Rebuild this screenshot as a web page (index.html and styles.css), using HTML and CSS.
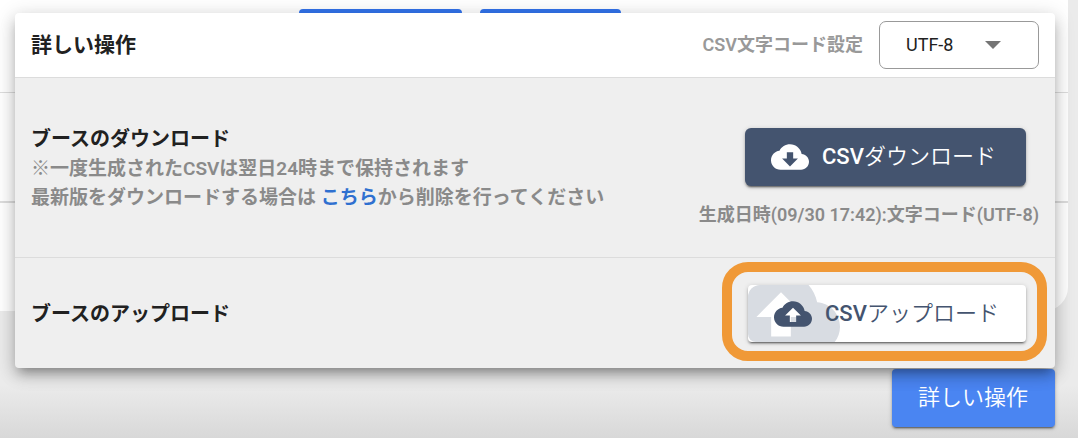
FILE: index.html
```html
<!DOCTYPE html>
<html lang="ja">
<head>
    <meta charset="UTF-8">
    <meta name="viewport" content="width=device-width, initial-scale=1.0">
    <title>詳しい操作</title>
    <link rel="stylesheet" href="styles.css">
</head>
<body>
    <!-- page sheet behind the panel -->
    <div class="sheet" aria-hidden="true">
        <div class="sheet-actions">
            <span class="sheet-tab"></span>
            <span class="sheet-tab short"></span>
        </div>
        <div class="sheet-line"></div>
        <div class="sheet-line thick"></div>
    </div>

    <main class="page">
        <section class="panel">
            <header class="panel-header">
                <h2>詳しい操作</h2>
                <div class="charset">
                    <label for="charset">CSV文字コード設定</label>
                    <div class="select-box">
                        <select id="charset">
                            <option>UTF-8</option>
                        </select>
                        <svg class="caret" viewBox="0 0 16 8"><path d="M0 0h16L8 8z"/></svg>
                    </div>
                </div>
            </header>

            <div class="row download-row">
                <div class="description">
                    <h3>ブースのダウンロード</h3>
                    <p>※一度生成されたCSVは翌日24時まで保持されます</p>
                    <p>最新版をダウンロードする場合は <a href="#">こちら</a>から削除を行ってください</p>
                </div>
                <div class="download">
                    <button type="button" class="btn btn-navy">
                        <svg class="icon" viewBox="0 4 24 16"><path d="M19.35 10.04C18.67 6.59 15.64 4 12 4 9.11 4 6.6 5.64 5.35 8.04 2.34 8.36 0 10.91 0 14c0 3.31 2.69 6 6 6h13c2.76 0 5-2.24 5-5 0-2.64-2.05-4.78-4.65-4.96zM17 13l-5 5-5-5h3V9h4v4h3z"/></svg>
                        <span class="btn-text"><b>CSV</b>ダウンロード</span>
                    </button>
                    <p class="generated">生成日時(09/30 17:42):文字コード(UTF-8)</p>
                </div>
            </div>

            <div class="row upload-row">
                <h3>ブースのアップロード</h3>
                <div class="upload">
                    <button type="button" class="btn btn-white">
                        <span class="watermark">
                            <svg viewBox="0 0 24 24"><path d="M19.35 10.04C18.67 6.59 15.64 4 12 4 9.11 4 6.6 5.64 5.35 8.04 2.34 8.36 0 10.91 0 14c0 3.31 2.69 6 6 6h13c2.76 0 5-2.24 5-5 0-2.64-2.05-4.78-4.65-4.96zM14 13v4h-4v-4H7l5-5 5 5h-3z"/></svg>
                        </span>
                        <svg class="icon" viewBox="0 4 24 16"><path d="M19.35 10.04C18.67 6.59 15.64 4 12 4 9.11 4 6.6 5.64 5.35 8.04 2.34 8.36 0 10.91 0 14c0 3.31 2.69 6 6 6h13c2.76 0 5-2.24 5-5 0-2.64-2.05-4.78-4.65-4.96zM14 13v4h-4v-4H7l5-5 5 5h-3z"/></svg>
                        <span class="btn-text"><b>CSV</b>アップロード</span>
                    </button>
                    <span class="highlight"></span>
                </div>
            </div>
        </section>

        <button type="button" class="btn btn-blue"><span class="btn-text">詳しい操作</span></button>
    </main>
</body>
</html>
```

FILE: styles.css
```css
* {
    margin: 0;
    padding: 0;
    box-sizing: border-box;
}

body {
    position: relative;
    min-height: 100vh;
    background: linear-gradient(#ebebeb 88%, #d8d8d8);
    font-family: Roboto, "Noto Sans CJK JP", sans-serif;
    color: #212121;
}

/* background sheet */
.sheet {
    position: absolute;
    top: 0;
    left: 0;
    right: 10px;
    height: 311px;
    padding-top: 9px;
    background: #fff;
    border-bottom-right-radius: 24px;
}

.sheet-actions {
    display: flex;
    gap: 18px;
    height: 83px;
    padding-left: 299px;
}

.sheet-tab {
    width: 163px;
    height: 58px;
    border-radius: 4px;
    background: #3273ec;
}

.sheet-tab.short {
    width: 141px;
}

.sheet-line {
    height: 109px;
    border-top: 1px solid #ddd;
}

.sheet-line.thick {
    border-top-width: 2px;
}

.page {
    position: relative;
    display: flex;
    flex-direction: column;
    padding: 13px 23px 0 15px;
}

/* panel */
.panel {
    position: relative;
    z-index: 1;
    border-radius: 4px;
    background: #efefef;
    box-shadow: 0 8px 10px -5px rgba(0, 0, 0, 0.3),
                0 8px 16px 1px rgba(0, 0, 0, 0.14),
                0 3px 20px 2px rgba(0, 0, 0, 0.12);
}

.panel-header {
    display: flex;
    justify-content: space-between;
    align-items: center;
    padding: 8px 16px;
    border-bottom: 1px solid #dcdcdc;
    border-radius: 4px 4px 0 0;
    background: #fff;
}

h2, h3 {
    font-size: 20px;
    font-weight: 600;
    line-height: 30px;
}

h2 {
    font-size: 21px;
}

.charset {
    display: flex;
    align-items: center;
    gap: 16px;
}

.charset label {
    color: #999;
    font-size: 18px;
    font-weight: 600;
    line-height: 26px;
}

.select-box {
    position: relative;
}

.select-box select {
    display: block;
    width: 160px;
    height: 48px;
    padding: 0 26px 2px;
    border: 1px solid #999;
    border-radius: 7px;
    background: #fff;
    color: #212121;
    font-family: inherit;
    font-size: 18px;
    appearance: none;
}

.caret {
    position: absolute;
    top: 20px;
    right: 38px;
    width: 16px;
    height: 8px;
    fill: #757575;
    pointer-events: none;
}

.row {
    display: flex;
    justify-content: space-between;
    padding: 0 16px;
}

.download-row {
    padding-top: 45px;
    padding-bottom: 29px;
    border-bottom: 1px solid #dcdcdc;
}

.description p {
    color: #8a8a8a;
    font-size: 19px;
    font-weight: 600;
    line-height: 29px;
}

.description h3 {
    padding-top: 1px;
}

.description a {
    color: #2f70d0;
    text-decoration: none;
}

.download {
    display: flex;
    flex-direction: column;
    align-items: flex-end;
    padding-top: 5px;
}

.generated {
    margin-top: 16px;
    color: #8a8a8a;
    font-size: 18px;
    font-weight: 600;
    line-height: 26px;
}

.upload-row {
    align-items: center;
    padding-top: 27px;
    padding-bottom: 26px;
}

.upload {
    position: relative;
    margin-right: 13px;
}

/* buttons */
.btn {
    display: flex;
    align-items: center;
    gap: 13px;
    height: 58px;
    padding: 0 26px;
    border: none;
    border-radius: 4px;
    font-family: inherit;
    font-size: 22px;
    font-weight: 350;
    cursor: pointer;
    box-shadow: 0 3px 1px -2px rgba(0, 0, 0, 0.3),
                0 2px 2px rgba(0, 0, 0, 0.24),
                0 1px 5px rgba(0, 0, 0, 0.18);
}

.btn b {
    font-weight: 500;
}

.btn-text {
    position: relative;
    padding-bottom: 6px;
}

.icon {
    position: relative;
    width: 38px;
    height: 26px;
    fill: currentColor;
}

.btn-navy {
    min-width: 281px;
    margin-right: 13px;
    border-radius: 6px;
    background: #44546f;
    color: #fff;
}

.btn-white {
    min-width: 278px;
    height: 57px;
    background: #fff;
    color: #44546f;
}

.btn-blue {
    align-self: flex-end;
    min-width: 163px;
    margin-top: 1px;
    background: #4a85f2;
    color: #fff;
}

/* oversized cloud, clipped by the button */
.watermark {
    position: absolute;
    inset: 0;
    overflow: hidden;
    border-radius: 12px 4px 4px 8px;
}

.watermark svg {
    position: absolute;
    top: -32px;
    left: -26px;
    width: 118px;
    height: 118px;
    fill: #d8dce2;
}

.highlight {
    position: absolute;
    inset: -23px -21px -19px -26px;
    border: 10px solid #f09937;
    border-radius: 26px;
    pointer-events: none;
}
```
